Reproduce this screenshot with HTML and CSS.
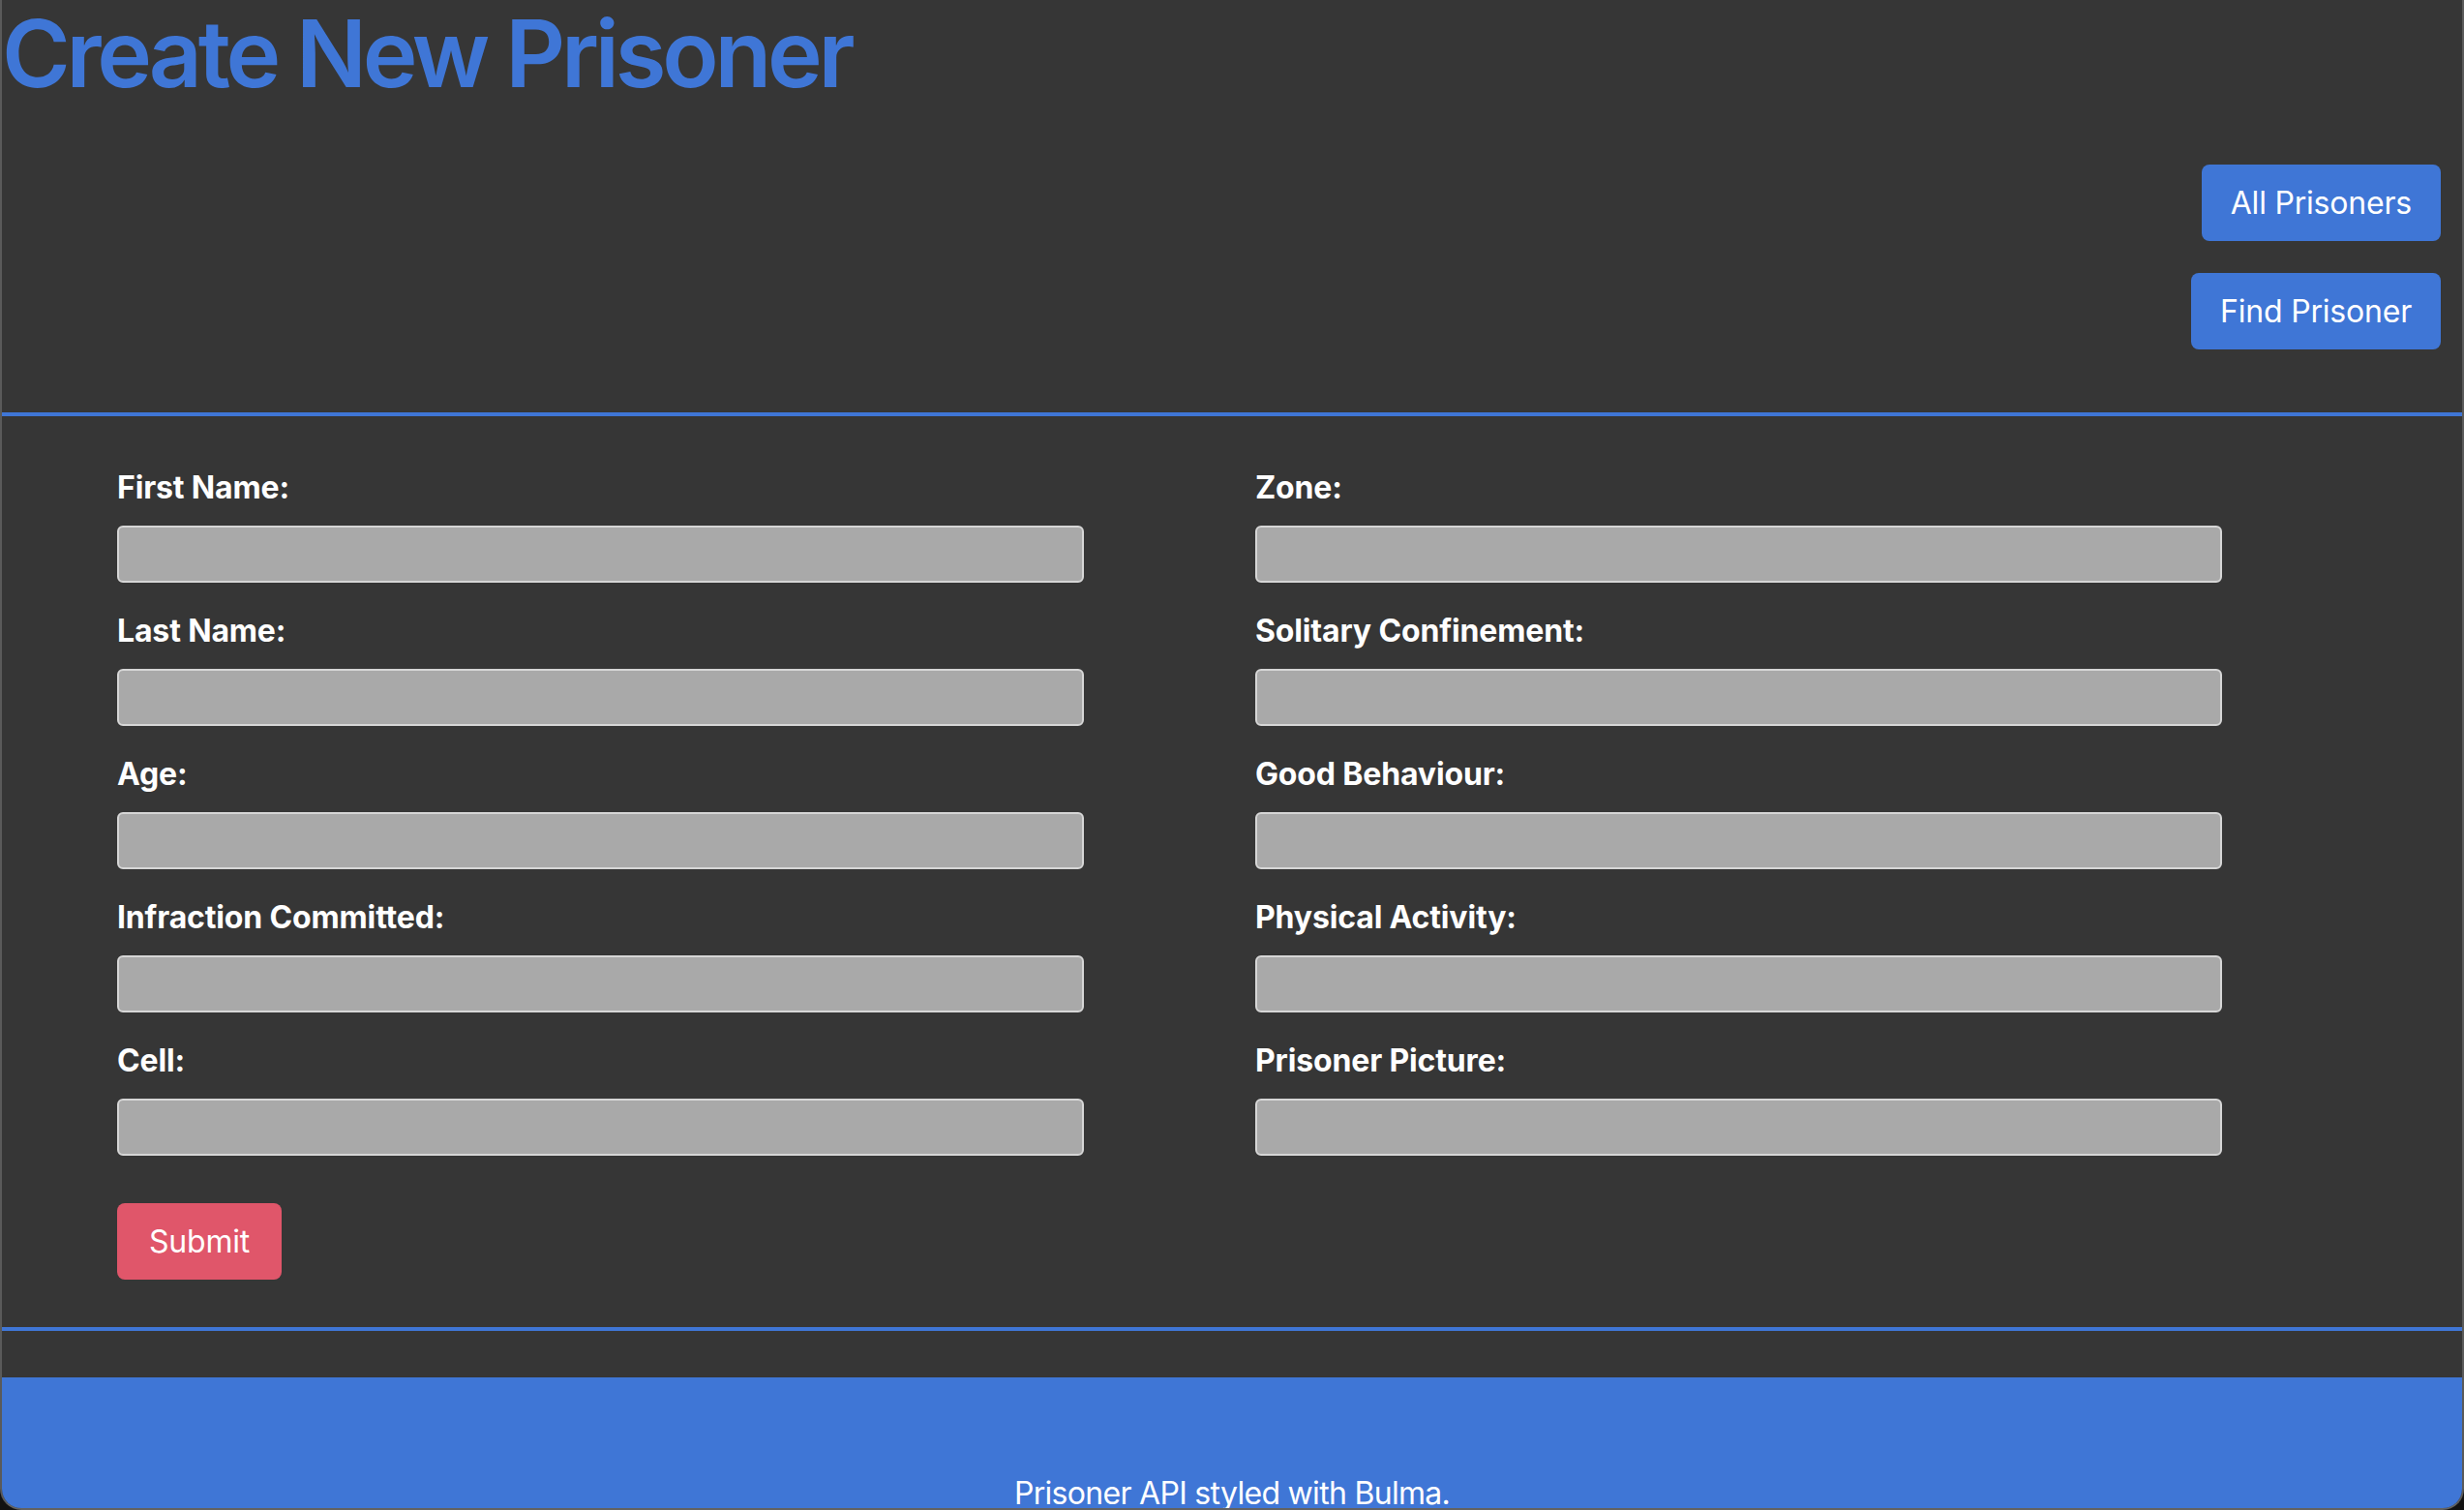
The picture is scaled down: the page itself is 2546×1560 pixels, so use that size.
FILE: index.html
```html
<!DOCTYPE html>
<html lang="en">
<head>
<meta charset="utf-8">
<title>Create New Prisoner</title>
<link rel="stylesheet" href="styles.css">
</head>
<body>
<div class="window">
  <header class="page-header">
    <h1 class="title">Create New Prisoner</h1>
    <nav class="actions">
      <a class="btn btn-primary" href="#">All Prisoners</a>
      <a class="btn btn-primary" href="#">Find Prisoner</a>
    </nav>
  </header>
  <hr class="rule">
  <form class="form">
    <div class="grid">
      <div class="col">
        <div class="field"><label class="label">First Name:</label><input class="input" type="text"></div>
        <div class="field"><label class="label">Last Name:</label><input class="input" type="text"></div>
        <div class="field"><label class="label">Age:</label><input class="input" type="text"></div>
        <div class="field"><label class="label">Infraction Committed:</label><input class="input" type="text"></div>
        <div class="field"><label class="label">Cell:</label><input class="input" type="text"></div>
      </div>
      <div class="col">
        <div class="field"><label class="label">Zone:</label><input class="input" type="text"></div>
        <div class="field"><label class="label">Solitary Confinement:</label><input class="input" type="text"></div>
        <div class="field"><label class="label">Good Behaviour:</label><input class="input" type="text"></div>
        <div class="field"><label class="label">Physical Activity:</label><input class="input" type="text"></div>
        <div class="field"><label class="label">Prisoner Picture:</label><input class="input" type="text"></div>
      </div>
    </div>
    <button class="btn btn-danger" type="button">Submit</button>
  </form>
  <hr class="rule rule-bottom">
  <footer class="footer">
    <p class="footer-text">Prisoner API styled with Bulma.</p>
  </footer>
</div>
</body>
</html>
```
FILE: styles.css
```css
* { box-sizing: border-box; }
html, body {
  margin: 0;
  padding: 0;
  background: #121212;
}
body {
  font-family: Inter, "Noto Sans", "Liberation Sans", sans-serif;
  color: #ffffff;
}
.window {
  width: 2546px;
  height: 1560px;
  overflow: hidden;
  background: #363636;
  border-left: 2px solid rgba(255,255,255,0.18);
  border-right: 2px solid rgba(255,255,255,0.18);
  border-bottom: 2px solid rgba(255,255,255,0.22);
  border-radius: 0 0 22px 22px;
}
.page-header {
  display: flex;
  flex-direction: column;
}
.title {
  margin: 0;
  padding-top: 1px;
  font-size: 96px;
  line-height: 108px;
  font-weight: 600;
  color: #3f76d6;
  letter-spacing: -4.2px;
}
.actions {
  display: flex;
  flex-direction: column;
  align-items: flex-end;
  gap: 33px;
  margin-top: 61px;
  padding-right: 22px;
}
.btn {
  display: inline-flex;
  align-items: center;
  justify-content: center;
  height: 79px;
  padding: 0 30px;
  border: 0;
  border-radius: 8px;
  font-family: inherit;
  font-size: 32px;
  font-weight: 400;
  letter-spacing: -0.2px;
  color: #ffffff;
  text-decoration: none;
  cursor: pointer;
}
.btn-primary { background: #3f76d6; }
.btn-danger {
  background: #e0566a;
  padding: 0 33px;
}
.rule {
  border: 0;
  height: 4px;
  background: #3f76d6;
  margin: 65px 0 50px;
}
.rule-bottom { margin: 49px 0 48px; }
.form {
  padding-left: 119px;
}
.grid {
  display: grid;
  grid-template-columns: 999px 999px;
  column-gap: 177px;
}
.col {
  display: flex;
  flex-direction: column;
  gap: 26px;
}
.field {
  display: flex;
  flex-direction: column;
}
.label {
  font-size: 32px;
  line-height: 48px;
  font-weight: 700;
  letter-spacing: -0.15px;
  color: #ffffff;
}
.input {
  margin-top: 15px;
  height: 59px;
  width: 100%;
  background: #a9a9a9;
  border: 2px solid #d6d6d6;
  border-radius: 6px;
  font-family: inherit;
  font-size: 28px;
}
.form .btn-danger {
  margin-top: 49px;
}
.footer {
  background: #3f76d6;
  padding: 96px 48px 192px;
  text-align: center;
}
.footer-text {
  margin: 0;
  font-size: 32px;
  line-height: 48px;
  letter-spacing: -0.7px;
  color: #ffffff;
}
```
